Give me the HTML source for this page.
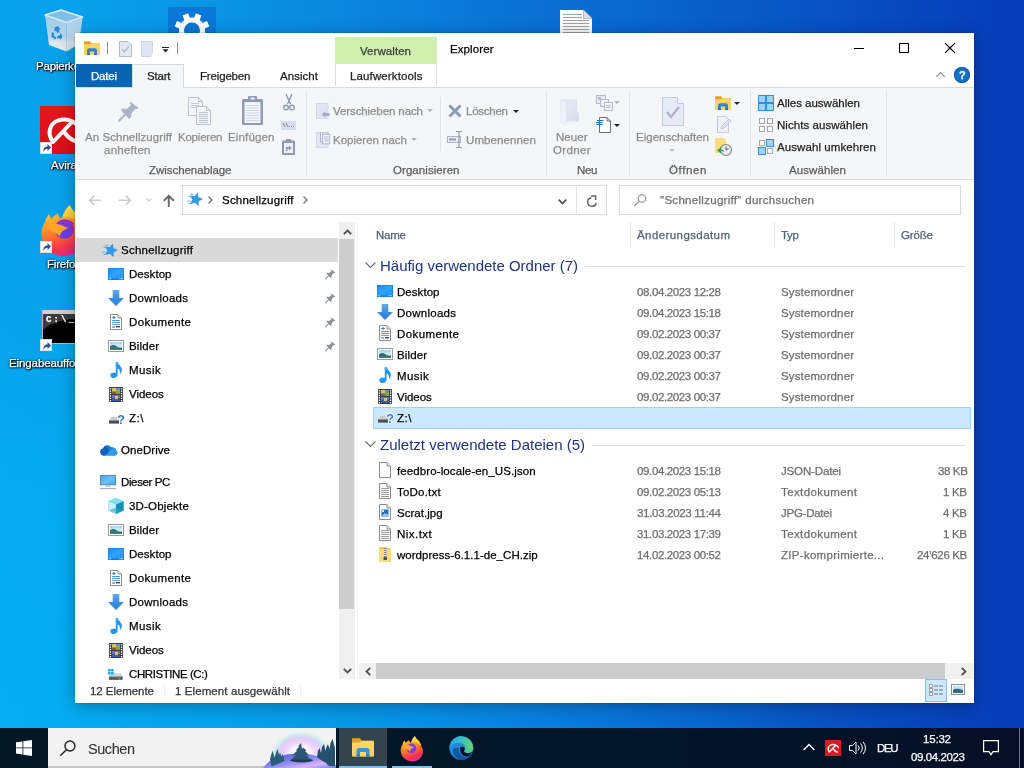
<!DOCTYPE html>
<html lang="de"><head><meta charset="utf-8"><title>Explorer</title>
<style>
html,body{margin:0;padding:0;width:1024px;height:768px;overflow:hidden;}
body{position:relative;font-family:'Liberation Sans',sans-serif;font-size:12px;background:#0a84d8;}
.a{position:absolute;}
.t{position:absolute;white-space:pre;line-height:20px;height:20px;}
svg{position:absolute;overflow:visible;}
#desk{position:absolute;left:0;top:0;width:1024px;height:728px;
 background:radial-gradient(ellipse 820px 480px at 0% 100%,rgba(0,190,255,.38) 0,rgba(0,190,255,.3) 50%,rgba(0,190,255,0) 100%),linear-gradient(90deg,#08a2ec 0px,#08a0ea 80px,#0a8ce0 300px,#0a72d6 520px,#0859c8 760px,#0742bc 960px,#063cb8 1024px);}
#win{position:absolute;left:75px;top:33px;width:899px;height:670px;background:#fff;box-shadow:0 0 1px rgba(0,0,0,.45),0 3px 16px rgba(0,0,0,.3);}
#task{position:absolute;left:0;top:728px;width:1024px;height:40px;background:linear-gradient(90deg,#021824 0,#03162a 60%,#050f26 100%);}
.dl{text-shadow:0 1px 2px #000,0 0 3px #000,1px 1px 1px #000;}
.t{will-change:transform;-webkit-text-stroke:0.25px currentColor;}

</style></head><body>
<div id="desk"></div>
<svg style="left:45px;top:10px" width="38" height="42" viewBox="0 0 38 42"><defs><linearGradient id="rb1" x1="0" y1="0" x2="0" y2="1"><stop offset="0" stop-color="#9ccbea"/><stop offset=".62" stop-color="#b7d6ea"/><stop offset=".75" stop-color="#dfe7ec"/><stop offset="1" stop-color="#e6ebee"/></linearGradient><linearGradient id="rb2" x1="0" y1="0" x2="0" y2="1"><stop offset="0" stop-color="#a9d2ee"/><stop offset=".62" stop-color="#bcd9ec"/><stop offset=".75" stop-color="#d9e3e9"/><stop offset="1" stop-color="#dde5ea"/></linearGradient></defs><path d="M0 5l21.500 7.500v29l-17.500-6.500z" fill="url(#rb1)"/><path d="M21.500 12.500l16.100-5.500-3.600 27-12.500 7.500z" fill="url(#rb2)"/><path d="M0 5l16-5 21.600 7-16.100 5.500z" fill="#7fbfe9" stroke="#d4eaf8" stroke-width="1.600" stroke-linejoin="round"/><g fill="#2a86dc"><path d="M9.500 17.500l3.500-1.500 2.500 3.500-1.800.6 1 2.200-2.400.8-1.200-2.400-1.600.6z"/><path d="M15.500 22.500l2 4-2 3.200-1-1.600-2.600.6.600-2.800 2.400-.6z"/><path d="M7 22l2.200 1.200-.4 2.600 2.600 1.800-1.200 2-3.800-2.800z"/></g></svg>
<span class="t" style="left:35.5px;top:56.0px;font-size:11.5px;color:#fff;letter-spacing:-0.192px;text-shadow:0 1px 2px #000,0 0 3px #000,1px 1px 1px #000;">Papierkorb</span>
<div class="a" style="left:168px;top:7px;width:48px;height:40px;background:#0a78d8"></div>
<svg style="left:168px;top:7px" width="48" height="40" viewBox="0 0 48 40"><circle cx="24" cy="23.500" r="10.500" fill="none" stroke="#fff" stroke-width="5"/><rect x="21" y="6" width="6" height="7" fill="#fff" transform="rotate(22.5 24 23.500)"/><rect x="21" y="6" width="6" height="7" fill="#fff" transform="rotate(67.5 24 23.500)"/><rect x="21" y="6" width="6" height="7" fill="#fff" transform="rotate(112.5 24 23.500)"/><rect x="21" y="6" width="6" height="7" fill="#fff" transform="rotate(157.5 24 23.500)"/><rect x="21" y="6" width="6" height="7" fill="#fff" transform="rotate(202.5 24 23.500)"/><rect x="21" y="6" width="6" height="7" fill="#fff" transform="rotate(247.5 24 23.500)"/><rect x="21" y="6" width="6" height="7" fill="#fff" transform="rotate(292.5 24 23.500)"/><rect x="21" y="6" width="6" height="7" fill="#fff" transform="rotate(337.5 24 23.500)"/></svg>
<svg style="left:560px;top:10px" width="32" height="40" viewBox="0 0 32 40"><path d="M0 0h23.500l8.500 8.500v31.500h-32z" fill="#fbfbfb"/><path d="M23.500 0v8.500h8.500z" fill="#dcdcdc"/><path d="M23.500 0v8.500h8.500" fill="none" stroke="#b0b0b0" stroke-width=".8"/><rect x="3" y="4" width="19" height="1" fill="#a2a2a2"/><rect x="3" y="7" width="19" height="1" fill="#a2a2a2"/><rect x="3" y="10" width="26" height="1" fill="#a2a2a2"/><rect x="3" y="13" width="26" height="1" fill="#a2a2a2"/><rect x="3" y="16" width="26" height="1" fill="#a2a2a2"/><rect x="3" y="19" width="26" height="1" fill="#a2a2a2"/><rect x="3" y="22" width="26" height="1" fill="#a2a2a2"/><rect x="3" y="25" width="26" height="1" fill="#a2a2a2"/></svg>
<div class="a" style="left:40px;top:106px;width:48px;height:48px;background:linear-gradient(180deg,#e5161e,#da0f18)"></div>
<svg style="left:40px;top:106px" width="48" height="48" viewBox="0 0 48 48"><path d="M13 36C7 28 9 18 18 14.500C24 12.500 30 13.500 35 17C38 19 40 22 41 25M13.500 35.500L31 17M24.500 26.500Q29 33 37 36" fill="none" stroke="#fff" stroke-width="4" stroke-linecap="round"/></svg>
<span class="t" style="left:50.8px;top:154.5px;font-size:11.5px;color:#fff;text-shadow:0 1px 2px #000,0 0 3px #000,1px 1px 1px #000;">Avira</span>
<svg style="left:40px;top:204.5px" width="48" height="48" viewBox="0 0 24 24"><defs><linearGradient id="ffg" x1=".3" y1="0" x2=".7" y2="1"><stop offset="0" stop-color="#ffbd2e"/><stop offset=".4" stop-color="#ff7a28"/><stop offset=".75" stop-color="#f8344e"/><stop offset="1" stop-color="#d82a9c"/></linearGradient><linearGradient id="ffy" x1="0" y1="0" x2="0" y2="1"><stop offset="0" stop-color="#fff04a"/><stop offset="1" stop-color="#ffb02a"/></linearGradient><radialGradient id="ffp" cx=".4" cy=".7" r=".8"><stop offset="0" stop-color="#5b45e8"/><stop offset="1" stop-color="#a12fd6"/></radialGradient></defs><path d="M11 7c.5-3 2-5.500 4-7 .5 2 2 3 3.500 4.500 1.500 1.700 2.500 3.500 3 5.500z" fill="url(#ffy)"/><path d="M2.500 8.500c.3-1.500 1-3 2-4 .3 1 .8 1.800 1.500 2.300.8-1.200 1.800-2 3-2.500.2 1 .6 1.800 1.300 2.300 4-1 8 .3 10.500 3.200 2.500 3 3 7 1 10.200a11.300 11.300 0 0 1-21-4.500c-.3-2.500.3-5 1.700-7z" fill="url(#ffg)"/><circle cx="12.200" cy="12" r="4.900" fill="url(#ffp)"/><path d="M4 9.800c2-.8 5-.6 7 .5l3 1.200-2.200 1.200c-1 .7-1.800 1.500-1.800 3-1.500-1.500-3.500-2.500-5.500-2.800z" fill="#ffa62a"/><path d="M13.500 7.500c1.800.2 3 1 3.800 2.200-1-.3-1.800-.3-2.600 0z" fill="#a12fd6"/></svg>
<span class="t" style="left:47px;top:253.5px;font-size:11.5px;color:#fff;letter-spacing:-0.193px;text-shadow:0 1px 2px #000,0 0 3px #000,1px 1px 1px #000;">Firefox</span>
<div class="a" style="left:42px;top:310px;width:46px;height:34px;background:#000;border:1px solid #b9b9b9;box-sizing:border-box;border-top:4px solid #d0d0d0"></div>
<svg style="left:43px;top:314px" width="44" height="16" viewBox="0 0 44 16"><path d="M0 0h44v4c-20 0-36 4-44 12z" fill="#3c3c3c"/></svg>
<span class="t" style="left:45.5px;top:309.5px;font-size:9px;color:#fff;font-weight:700;letter-spacing:2.161px;font-family:'Liberation Mono',monospace;">C:\_</span>
<span class="t" style="left:8.8px;top:353.0px;font-size:11.5px;color:#fff;letter-spacing:-0.101px;text-shadow:0 1px 2px #000,0 0 3px #000,1px 1px 1px #000;">Eingabeaufforderung</span>
<div class="a" style="left:40px;top:141.5px;width:12px;height:12px;background:#fff;border:1px solid #d5dbe0;box-sizing:border-box"></div>
<svg style="left:42.5px;top:144.0px" width="8" height="8" viewBox="0 0 8 8"><path d="M.5 8c-.5-4 1.500-5.500 4-5.500v-2.500l3.500 3.500-3.500 3.500v-2.300c-2 0-3 1-4 3.300z" fill="#2b4f9c"/></svg>
<div class="a" style="left:40px;top:240.5px;width:12px;height:12px;background:#fff;border:1px solid #d5dbe0;box-sizing:border-box"></div>
<svg style="left:42.5px;top:243.0px" width="8" height="8" viewBox="0 0 8 8"><path d="M.5 8c-.5-4 1.500-5.500 4-5.500v-2.500l3.500 3.500-3.500 3.500v-2.300c-2 0-3 1-4 3.300z" fill="#2b4f9c"/></svg>
<div class="a" style="left:40px;top:339px;width:12px;height:12px;background:#fff;border:1px solid #d5dbe0;box-sizing:border-box"></div>
<svg style="left:42.5px;top:341.5px" width="8" height="8" viewBox="0 0 8 8"><path d="M.5 8c-.5-4 1.500-5.500 4-5.500v-2.500l3.500 3.500-3.500 3.500v-2.300c-2 0-3 1-4 3.300z" fill="#2b4f9c"/></svg>
<div id="win"></div>
<svg style="left:84px;top:41px" width="16" height="14.0" viewBox="0 0 16 14"><path d="M0 1a.8 .8 0 0 1 .8-.8h5.200l1.500 2h8a.5 .5 0 0 1 .5 .5v10.800a.5 .5 0 0 1-.5 .5h-15a.5 .5 0 0 1-.5-.5z" fill="#e3a11c"/><path d="M0 3.200h5.500l1.500-1h8.500a.5 .5 0 0 1 .5 .5v10.800a.5 .5 0 0 1-.5 .5h-15a.5 .5 0 0 1-.5-.5z" fill="#fbd467"/><path d="M3 14v-4.500a2.200 2.200 0 0 1 2.200-2.200h5.600a2.200 2.200 0 0 1 2.200 2.200v4.500h-2.800v-3.500h-4.400v3.500z" fill="#2b86d6"/><path d="M3 12.500h2.800v1.500h-2.800zM10.200 12.500h2.800v1.500h-2.800z" fill="#1f6cb8"/></svg>
<div class="a" style="left:107px;top:42px;width:1px;height:12px;background:#8a8a8a"></div>
<svg style="left:119px;top:41px" width="13" height="16" viewBox="0 0 13 16"><path d="M.5 .5h8.500l3.500 3.500v11.500h-12z" fill="#e4eaf5" stroke="#b4bccb"/><path d="M3 8l2.500 3 4.500-6" fill="none" stroke="#b4bccb" stroke-width="1.300"/></svg>
<svg style="left:141px;top:41px" width="13" height="16" viewBox="0 0 13 16"><path d="M.5 .5h11v11l-1.500 1.500v2.500h-9.500z" fill="#dfe6f3" stroke="#cdd5e4"/></svg>
<svg style="left:162px;top:47px" width="7" height="6" viewBox="0 0 7 6"><rect x="0" y="0" width="7" height="1" fill="#222"/><path d="M.5 2.300h6l-3 3.200z" fill="#222"/></svg>
<div class="a" style="left:177px;top:42px;width:1px;height:12px;background:#8a8a8a"></div>
<div class="a" style="left:335px;top:37px;width:102px;height:27px;background:#d0eeae"></div>
<span class="t" style="left:360px;top:41.0px;font-size:11.5px;color:#3c3c3c;letter-spacing:0.061px;">Verwalten</span>
<span class="t" style="left:450px;top:39.0px;font-size:11.5px;color:#000;letter-spacing:0.096px;">Explorer</span>
<div class="a" style="left:854px;top:48px;width:10px;height:1px;background:#000"></div>
<div class="a" style="left:899px;top:43px;width:10px;height:10px;border:1px solid #000;box-sizing:border-box"></div>
<svg style="left:945px;top:43px" width="10" height="10" viewBox="0 0 10 10"><path d="M0 0l10 10M10 0l-10 10" stroke="#000" stroke-width="1.100"/></svg>
<div class="a" style="left:75px;top:87px;width:899px;height:1px;background:#dadbdc"></div>
<div class="a" style="left:76px;top:64px;width:56px;height:23px;background:#0a64b4"></div>
<span class="t" style="left:90.5px;top:66.0px;font-size:11.5px;color:#fff;letter-spacing:-0.215px;">Datei</span>
<div class="a" style="left:132px;top:64px;width:52px;height:24px;background:#f5f6f7;border:1px solid #dadbdc;border-bottom:none;box-sizing:border-box"></div>
<span class="t" style="left:146.5px;top:66.0px;font-size:11.5px;color:#222;letter-spacing:-0.199px;">Start</span>
<span class="t" style="left:200px;top:66.0px;font-size:11.5px;color:#222;letter-spacing:-0.162px;">Freigeben</span>
<span class="t" style="left:280px;top:66.0px;font-size:11.5px;color:#222;letter-spacing:0.047px;">Ansicht</span>
<div class="a" style="left:335px;top:64px;width:102px;height:22px;border-left:1px solid #dcdcdc;border-right:1px solid #dcdcdc;box-sizing:border-box"></div>
<span class="t" style="left:349.5px;top:66.0px;font-size:11.5px;color:#222;letter-spacing:0.128px;">Laufwerktools</span>
<svg style="left:936px;top:72px" width="9" height="6" viewBox="0 0 9 6"><path d="M.3 4.800l4.200-4.200 4.200 4.200" fill="none" stroke="#8c8c8c" stroke-width="1.100"/></svg>
<div class="a" style="left:954px;top:67px;width:16px;height:16px;border-radius:50%;background:#1470c6;box-shadow:inset 0 0 0 1px #0f5fae;"></div>
<span class="t" style="left:958.8px;top:65.3px;font-size:11px;color:#fff;font-weight:700;">?</span>
<div class="a" style="left:75px;top:88px;width:899px;height:91px;background:#f5f6f7"></div>
<div class="a" style="left:75px;top:179px;width:899px;height:1px;background:#dadbdc"></div>
<div class="a" style="left:306px;top:91px;width:1px;height:84px;background:#e2e3e4"></div>
<div class="a" style="left:546px;top:91px;width:1px;height:84px;background:#e2e3e4"></div>
<div class="a" style="left:629px;top:91px;width:1px;height:84px;background:#e2e3e4"></div>
<div class="a" style="left:750px;top:91px;width:1px;height:84px;background:#e2e3e4"></div>
<div class="a" style="left:886px;top:91px;width:1px;height:84px;background:#e2e3e4"></div>
<div class="a" style="left:440px;top:97px;width:1px;height:54px;background:#e2e3e4"></div>
<svg style="left:117.5px;top:100.5px" width="21" height="21" viewBox="0 0 21 21"><path d="M12.600 .8L20.400 6.800L19.300 8.200L17.500 7.800L13.500 12L13.200 15.600L11.500 18.300L2.700 9L5 7.500L8.800 8L13 3.800L11.600 2.200Z" fill="#a9b6ca"/><path d="M7 13.500L1.200 19.800" stroke="#a9b6ca" stroke-width="2" stroke-linecap="round"/></svg>
<span class="t" style="left:84.5px;top:127.0px;font-size:11.5px;color:#8b8b8b;letter-spacing:0.057px;">An Schnellzugriff</span>
<span class="t" style="left:104px;top:140.0px;font-size:11.5px;color:#8b8b8b;letter-spacing:0.248px;">anheften</span>
<svg style="left:188px;top:97px" width="24" height="28" viewBox="0 0 24 28"><path d="M.5 .5h10l4 4v14h-14z" fill="#f4f6fa" stroke="#b9c2d3"/><path d="M10.500 .5v4h4" fill="none" stroke="#b9c2d3"/><rect x="3" y="6" width="8" height="1" fill="#c3cbda"/><rect x="3" y="8" width="8" height="1" fill="#c3cbda"/><rect x="3" y="10" width="8" height="1" fill="#c3cbda"/><path d="M8.500 9.500h10l4 4v14h-14z" fill="#f4f6fa" stroke="#b9c2d3"/><path d="M18.500 9.500v4h4" fill="none" stroke="#b9c2d3"/><rect x="11" y="15" width="9" height="1" fill="#b9c2d3"/><rect x="11" y="17" width="9" height="1" fill="#b9c2d3"/><rect x="11" y="19" width="9" height="1" fill="#b9c2d3"/><rect x="11" y="21" width="9" height="1" fill="#b9c2d3"/><rect x="11" y="23" width="9" height="1" fill="#b9c2d3"/><rect x="11" y="25" width="9" height="1" fill="#b9c2d3"/></svg>
<span class="t" style="left:177.5px;top:127.0px;font-size:11.5px;color:#8b8b8b;letter-spacing:-0.221px;">Kopieren</span>
<svg style="left:242px;top:96px" width="21" height="29" viewBox="0 0 21 29"><rect x="0" y="3" width="21" height="26" rx="1.500" fill="#8d9ab5"/><rect x="2.500" y="6" width="16" height="21" fill="#f1f4f9"/><rect x="6" y="0" width="9" height="6" rx="1" fill="#8d9ab5"/><rect x="8.500" y="1.500" width="4" height="2" fill="#f1f4f9"/><rect x="4" y="9.0" width="13" height="1" fill="#cfd6e4"/><rect x="4" y="11.5" width="13" height="1" fill="#cfd6e4"/><rect x="4" y="14.0" width="13" height="1" fill="#cfd6e4"/><rect x="4" y="16.5" width="13" height="1" fill="#cfd6e4"/><rect x="4" y="19.0" width="13" height="1" fill="#cfd6e4"/><rect x="4" y="21.5" width="13" height="1" fill="#cfd6e4"/><rect x="4" y="24.0" width="13" height="1" fill="#cfd6e4"/></svg>
<span class="t" style="left:228px;top:127.0px;font-size:11.5px;color:#8b8b8b;letter-spacing:0.156px;">Einfügen</span>
<svg style="left:283px;top:94px" width="12" height="17" viewBox="0 0 12 17"><path d="M3 0l4.500 10M9 0l-4.500 10" stroke="#8d9ab5" stroke-width="1.400" fill="none"/><circle cx="3" cy="13.500" r="2.300" fill="none" stroke="#8d9ab5" stroke-width="1.400"/><circle cx="9" cy="13.500" r="2.300" fill="none" stroke="#8d9ab5" stroke-width="1.400"/></svg>
<div class="a" style="left:281px;top:121px;width:15px;height:9px;background:#d5dcea"></div>
<svg style="left:283px;top:123px" width="11" height="5" viewBox="0 0 11 5"><path d="M0 0l2 4M3 0l2 4" stroke="#7c8aa8" stroke-width="1"/><rect x="6" y="3" width="1" height="1" fill="#7c8aa8"/><rect x="8" y="3" width="1" height="1" fill="#7c8aa8"/><rect x="10" y="3" width="1" height="1" fill="#7c8aa8"/></svg>
<svg style="left:282px;top:139px" width="13" height="16" viewBox="0 0 13 16"><rect x="0" y="1.500" width="13" height="14.500" rx="1" fill="#8d9ab5"/><rect x="2" y="4" width="9" height="10" fill="#eef2f8"/><rect x="4" y="0" width="5" height="3" fill="#8d9ab5"/><path d="M4 12v-4h3v-1.500l3 2.500-3 2.500v-1.500h-1.500v2z" fill="#8d9ab5"/></svg>
<span class="t" style="left:149px;top:160.0px;font-size:11.5px;color:#5c5c5c;letter-spacing:-0.047px;">Zwischenablage</span>
<svg style="left:316px;top:103px" width="14" height="16" viewBox="0 0 14 16"><rect x=".5" y=".5" width="11.500" height="15" fill="#dfe5f2" stroke="#d0d8e9"/><path d="M13.500 10v3h-4v2l-4-3.500 4-3.500v2z" fill="#a3b0c8"/></svg>
<span class="t" style="left:333px;top:101.0px;font-size:11.5px;color:#8b8b8b;letter-spacing:-0.096px;">Verschieben nach</span>
<svg style="left:427px;top:109px" width="6" height="3" viewBox="0 0 6 3"><path d="M0 0h6l-3 3z" fill="#b5b5b5"/></svg>
<svg style="left:316px;top:132px" width="14" height="16" viewBox="0 0 14 16"><rect x=".5" y=".5" width="11.500" height="15" fill="#dfe5f2" stroke="#d0d8e9"/><rect x="4.500" y=".8" width="7.500" height="9" fill="#eef1f7" stroke="#aab5cb" stroke-width=".9"/><rect x="6.500" y="2.500" width="7.200" height="9.300" fill="#f3f5fa" stroke="#aab5cb" stroke-width=".9"/><path d="M8 5h4.500M8 7h4.500M8 9h4.500" stroke="#aab5cb" stroke-width=".9"/></svg>
<span class="t" style="left:333px;top:129.5px;font-size:11.5px;color:#8b8b8b;letter-spacing:-0.014px;">Kopieren nach</span>
<svg style="left:411px;top:137.5px" width="6" height="3" viewBox="0 0 6 3"><path d="M0 0h6l-3 3z" fill="#b5b5b5"/></svg>
<svg style="left:448px;top:104px" width="14" height="14" viewBox="0 0 14 14"><path d="M1.500 1.500l11 11M12.500 1.500l-11 11" stroke="#8d9ab5" stroke-width="3"/></svg>
<span class="t" style="left:466px;top:101.0px;font-size:11.5px;color:#8b8b8b;letter-spacing:-0.247px;">Löschen</span>
<svg style="left:513px;top:109.5px" width="6" height="3" viewBox="0 0 6 3"><path d="M0 0h6l-3 3z" fill="#222"/></svg>
<svg style="left:447px;top:131px" width="17" height="17" viewBox="0 0 17 17"><rect x=".5" y="5.500" width="13" height="6" fill="#e8edf5" stroke="#a9b4c9"/><rect x="2" y="7.500" width="7" height="2" fill="#8d9ab5"/><path d="M9 .5h6M9 16.500h6M12 .5v16" stroke="#8d9ab5" stroke-width="1.200" fill="none"/></svg>
<span class="t" style="left:466px;top:129.5px;font-size:11.5px;color:#8b8b8b;letter-spacing:0.104px;">Umbenennen</span>
<span class="t" style="left:392.5px;top:160.0px;font-size:11.5px;color:#5c5c5c;letter-spacing:0.060px;">Organisieren</span>
<svg style="left:560px;top:98px" width="21" height="28" viewBox="0 0 21 28"><defs><linearGradient id="nfg" x1="0" y1="0" x2="1" y2="1"><stop offset="0" stop-color="#e6ebf5"/><stop offset="1" stop-color="#d6deee"/></linearGradient></defs><path d="M1 1.200H17V12.500L19 15.500V23.600H6L1 18Z" fill="url(#nfg)"/><path d="M1 1.200L6.200 4.500V27.500L1 23.600Z" fill="#eef2f9" stroke="#dde3ef" stroke-width=".6"/></svg>
<span class="t" style="left:556px;top:127.0px;font-size:11.5px;color:#8b8b8b;letter-spacing:0.043px;">Neuer</span>
<span class="t" style="left:553px;top:140.0px;font-size:11.5px;color:#8b8b8b;letter-spacing:0.341px;">Ordner</span>
<svg style="left:596px;top:95px" width="17" height="16" viewBox="0 0 17 16"><rect x=".5" y=".5" width="9" height="8" fill="#e4e9f3" stroke="#b3bccf"/><rect x="2" y="2" width="3" height="3" fill="#b3bccf"/><rect x="4.500" y="4.500" width="8" height="7" fill="#eef1f7" stroke="#b3bccf"/><rect x="8.500" y="7.500" width="8" height="8" fill="#f4f6fa" stroke="#b3bccf"/><rect x="10" y="10" width="5" height="1" fill="#b3bccf"/><rect x="10" y="12" width="5" height="1" fill="#b3bccf"/></svg>
<svg style="left:614px;top:101px" width="6" height="3" viewBox="0 0 6 3"><path d="M0 0h6l-3 3z" fill="#b5b5b5"/></svg>
<svg style="left:596px;top:117px" width="16" height="16" viewBox="0 0 16 16"><path d="M3.500 .5h7.500l3.500 3.500v11.500h-11z" fill="#fff" stroke="#6e6e6e"/><path d="M11 .5v3.500h3.500" fill="none" stroke="#6e6e6e"/><path d="M1 3.500h6.500M0 5.500h6.500M.5 7.500h6" stroke="#1f6fc4" stroke-width="1"/></svg>
<svg style="left:614px;top:123.5px" width="6" height="3" viewBox="0 0 6 3"><path d="M0 0h6l-3 3z" fill="#222"/></svg>
<span class="t" style="left:576.5px;top:160.0px;font-size:11.5px;color:#5c5c5c;letter-spacing:-0.305px;">Neu</span>
<svg style="left:662px;top:97px" width="22" height="29" viewBox="0 0 22 29"><path d="M.5 .5h15l6 6v22h-21z" fill="#e6ebf6" stroke="#c3cbde"/><path d="M15.500 .5v6h6" fill="#f4f6fb" stroke="#c3cbde"/><path d="M5 15l4 5 8-10" fill="none" stroke="#a9b4c9" stroke-width="2.200"/></svg>
<span class="t" style="left:636px;top:127.0px;font-size:11.5px;color:#8b8b8b;letter-spacing:0.009px;">Eigenschaften</span>
<svg style="left:669px;top:149px" width="6" height="3" viewBox="0 0 6 3"><path d="M0 0h6l-3 3z" fill="#c2c2c2"/></svg>
<svg style="left:715px;top:96px" width="16" height="14.0" viewBox="0 0 16 14"><path d="M0 1a.8 .8 0 0 1 .8-.8h5.200l1.500 2h8a.5 .5 0 0 1 .5 .5v10.800a.5 .5 0 0 1-.5 .5h-15a.5 .5 0 0 1-.5-.5z" fill="#e3a11c"/><path d="M0 3.200h5.500l1.500-1h8.500a.5 .5 0 0 1 .5 .5v10.800a.5 .5 0 0 1-.5 .5h-15a.5 .5 0 0 1-.5-.5z" fill="#fbd467"/><path d="M3 14v-4.500a2.200 2.200 0 0 1 2.200-2.200h5.600a2.200 2.200 0 0 1 2.200 2.200v4.500h-2.800v-3.500h-4.400v3.500z" fill="#2b86d6"/><path d="M3 12.500h2.800v1.500h-2.800zM10.200 12.500h2.800v1.500h-2.800z" fill="#1f6cb8"/></svg>
<svg style="left:734px;top:102px" width="6" height="3" viewBox="0 0 6 3"><path d="M0 0h6l-3 3z" fill="#222"/></svg>
<svg style="left:717px;top:116px" width="14" height="17" viewBox="0 0 14 17"><path d="M.5 .5h8l3 3v13h-11z" fill="#eef1f7" stroke="#c3cbde"/><path d="M4 13l1-3 7-7 2 2-7 7z" fill="#dfe5f0" stroke="#b3bccf" stroke-width=".8"/></svg>
<svg style="left:715px;top:138px" width="17" height="18" viewBox="0 0 17 18"><path d="M0 0h9l2 2v13h-11z" fill="#f7dd7e"/><circle cx="11" cy="12" r="5.500" fill="#e9ecef" stroke="#7d8790" stroke-width="1.200"/><path d="M11 8.500v3.500l2.500-1.500" stroke="#555" fill="none" stroke-width="1"/><path d="M2 12.500l4-3.500v2.500c2 0 3 1 3.500 3-1-1-2-1.500-3.500-1.500v2.500z" fill="#2fa84f"/></svg>
<span class="t" style="left:668.5px;top:160.0px;font-size:11.5px;color:#5c5c5c;letter-spacing:0.634px;">Öffnen</span>
<svg style="left:758px;top:95px" width="16" height="16" viewBox="0 0 16 16"><rect x="0.5" y="0.5" width="7" height="7" fill="#9fd3f6" stroke="#2f8fdc"/><rect x="8.5" y="0.5" width="7" height="7" fill="#9fd3f6" stroke="#2f8fdc"/><rect x="0.5" y="8.5" width="7" height="7" fill="#9fd3f6" stroke="#2f8fdc"/><rect x="8.5" y="8.5" width="7" height="7" fill="#9fd3f6" stroke="#2f8fdc"/></svg>
<span class="t" style="left:777px;top:93.0px;font-size:11.5px;color:#1e1e1e;letter-spacing:-0.008px;">Alles auswählen</span>
<svg style="left:758px;top:117px" width="16" height="16" viewBox="0 0 16 16"><rect x="1.5" y="1.5" width="5" height="5" fill="#fff" stroke="#a6a6a6"/><rect x="9.5" y="1.5" width="5" height="5" fill="#fff" stroke="#a6a6a6"/><rect x="1.5" y="9.5" width="5" height="5" fill="#fff" stroke="#a6a6a6"/><rect x="9.5" y="9.5" width="5" height="5" fill="#fff" stroke="#a6a6a6"/></svg>
<span class="t" style="left:777px;top:115.0px;font-size:11.5px;color:#1e1e1e;letter-spacing:0.057px;">Nichts auswählen</span>
<svg style="left:758px;top:139px" width="16" height="16" viewBox="0 0 16 16"><rect x="1.5" y="1.5" width="5" height="5" fill="#fff" stroke="#a6a6a6"/><rect x="8.5" y="0.5" width="7" height="7" fill="#9fd3f6" stroke="#2f8fdc"/><rect x="0.5" y="8.5" width="7" height="7" fill="#9fd3f6" stroke="#2f8fdc"/><rect x="9.5" y="9.5" width="5" height="5" fill="#fff" stroke="#a6a6a6"/></svg>
<span class="t" style="left:777px;top:137.0px;font-size:11.5px;color:#1e1e1e;letter-spacing:0.079px;">Auswahl umkehren</span>
<span class="t" style="left:789px;top:160.0px;font-size:11.5px;color:#5c5c5c;letter-spacing:0.092px;">Auswählen</span>
<svg style="left:89px;top:194.5px" width="12" height="10.5" viewBox="0 0 12 10.5"><path d="M5.300 .6l-4.600 4.650 4.600 4.650M.8 5.250h11.200" fill="none" stroke="#cdcdcd" stroke-width="1.700"/></svg>
<svg style="left:119px;top:194.5px" width="12" height="10.5" viewBox="0 0 12 10.5"><path d="M6.700 .6l4.600 4.650-4.600 4.650M11.200 5.250h-11.200" fill="none" stroke="#cdcdcd" stroke-width="1.700"/></svg>
<svg style="left:145.5px;top:198px" width="6" height="3.5" viewBox="0 0 6 3.5"><path d="M.4 .4l2.600 2.600 2.600-2.600" fill="none" stroke="#cdcdcd" stroke-width="1.200"/></svg>
<svg style="left:163px;top:195px" width="11.5" height="12" viewBox="0 0 11.5 12"><path d="M.8 5.800l5-5 5 5M5.800 1.200v10.800" fill="none" stroke="#6a6a6a" stroke-width="2"/></svg>
<div class="a" style="left:182px;top:185px;width:425px;height:30px;border:1px solid #d9d9d9;box-sizing:border-box;background:#fff"></div>
<div class="a" style="left:576px;top:186px;width:1px;height:28px;background:#e5e5e5"></div>
<svg style="left:186.5px;top:192.5px" width="15" height="12.5" viewBox="0 0 15 12.5"><polygon points="10.51,0.02 11.21,4.45 15.39,6.05 11.40,8.09 11.17,12.56 8.00,9.39 3.67,10.55 5.70,6.56 3.26,2.81 7.69,3.51" fill="#2e9bee" stroke="#1f7fd0" stroke-width=".5"/><path d="M3.500 1.300h3M1.500 3.600h3.500M.3 8.200h3.200M1.500 10.500h2.500" stroke="#55aef0" stroke-width=".9"/></svg>
<svg style="left:208px;top:196px" width="5" height="8" viewBox="0 0 5 8"><path d="M.5 .5l3.500 3.500-3.500 3.500" fill="none" stroke="#6a6a6a" stroke-width="1.200"/></svg>
<span class="t" style="left:222px;top:190.0px;font-size:11.5px;color:#000;letter-spacing:0.206px;">Schnellzugriff</span>
<svg style="left:303px;top:196px" width="5" height="8" viewBox="0 0 5 8"><path d="M.5 .5l3.500 3.500-3.500 3.500" fill="none" stroke="#6a6a6a" stroke-width="1.200"/></svg>
<svg style="left:558px;top:199px" width="9" height="6" viewBox="0 0 9 6"><path d="M.7 .7l3.800 3.800 3.800-3.800" fill="none" stroke="#555" stroke-width="1.800"/></svg>
<svg style="left:587px;top:194.5px" width="10" height="12" viewBox="0 0 10 12"><path d="M9.230 7.750A4.300 4.300 0 1 1 4.250 2.770" fill="none" stroke="#666" stroke-width="1.500"/><path d="M4 .9h4.600v4" fill="none" stroke="#666" stroke-width="1.500"/></svg>
<div class="a" style="left:619px;top:185px;width:342px;height:30px;border:1px solid #d9d9d9;box-sizing:border-box;background:#fff"></div>
<svg style="left:634px;top:193.5px" width="12" height="12" viewBox="0 0 12 12"><circle cx="8" cy="4.500" r="3.800" fill="none" stroke="#8a8a8a" stroke-width="1.100"/><path d="M5.300 7.200l-4.800 4.800" stroke="#8a8a8a" stroke-width="1.100"/></svg>
<span class="t" style="left:660px;top:190.0px;font-size:11.5px;color:#6d6d6d;letter-spacing:0.295px;">"Schnellzugriff" durchsuchen</span>
<div class="a" style="left:76px;top:238px;width:262px;height:24px;background:#d9d9d9"></div>
<svg style="left:102px;top:243.5px" width="15" height="12.5" viewBox="0 0 15 12.5"><polygon points="10.51,0.02 11.21,4.45 15.39,6.05 11.40,8.09 11.17,12.56 8.00,9.39 3.67,10.55 5.70,6.56 3.26,2.81 7.69,3.51" fill="#2e9bee" stroke="#1f7fd0" stroke-width=".5"/><path d="M3.500 1.300h3M1.500 3.600h3.500M.3 8.200h3.200M1.500 10.500h2.500" stroke="#55aef0" stroke-width=".9"/></svg>
<span class="t" style="left:121px;top:240.0px;font-size:11.5px;color:#000;letter-spacing:0.244px;">Schnellzugriff</span>
<svg style="left:108px;top:268px" width="16" height="12" viewBox="0 0 16 12"><defs><linearGradient id="dg" x1="0" y1="0" x2="1" y2="1"><stop offset="0" stop-color="#1f8df0"/><stop offset=".5" stop-color="#2fa3f8"/><stop offset="1" stop-color="#2196f3"/></linearGradient></defs><rect x="0" y="0" width="16" height="12" fill="#1a7ad6"/><rect x=".6" y=".6" width="14.800" height="9.400" fill="url(#dg)"/><rect x=".6" y="10" width="14.800" height="1.400" fill="#1f86e4"/><rect x="1.500" y="10.200" width="1.200" height="1" fill="#fff"/><rect x="13.300" y="10.200" width="1.200" height="1" fill="#fff"/><rect x="11.500" y="10.200" width="1" height="1" fill="#cfe6fb"/></svg>
<span class="t" style="left:129.3px;top:264.0px;font-size:11.5px;color:#000;letter-spacing:0.052px;">Desktop</span>
<svg style="left:324.7px;top:268.8px" width="10.5" height="10.5" viewBox="0 0 21 21"><path d="M12.600 .8L20.400 6.800L19.300 8.200L17.500 7.800L13.500 12L13.200 15.600L11.500 18.300L2.700 9L5 7.500L8.800 8L13 3.800L11.600 2.200Z" fill="#8c9196"/><path d="M7 13.500L1.200 19.800" stroke="#8c9196" stroke-width="2.200" stroke-linecap="round"/></svg>
<svg style="left:108px;top:290px" width="16" height="16" viewBox="0 0 16 16"><defs><linearGradient id="dlg" x1="0" y1="0" x2="0" y2="1"><stop offset="0" stop-color="#62aaec"/><stop offset=".5" stop-color="#3a8fe0"/><stop offset="1" stop-color="#2f7fd4"/></linearGradient></defs><path d="M4.700 0h6.600v8h4.700l-8 8-8-8h4.700z" fill="url(#dlg)"/></svg>
<span class="t" style="left:129.3px;top:288.0px;font-size:11.5px;color:#000;letter-spacing:0.262px;">Downloads</span>
<svg style="left:324.7px;top:292.8px" width="10.5" height="10.5" viewBox="0 0 21 21"><path d="M12.600 .8L20.400 6.800L19.300 8.200L17.500 7.800L13.500 12L13.200 15.600L11.500 18.300L2.700 9L5 7.500L8.800 8L13 3.800L11.600 2.200Z" fill="#8c9196"/><path d="M7 13.500L1.200 19.800" stroke="#8c9196" stroke-width="2.200" stroke-linecap="round"/></svg>
<svg style="left:110px;top:314px" width="12" height="16" viewBox="0 0 12 16"><path d="M.5 .5h7.500l3.500 3.500v11.500h-11z" fill="#fff" stroke="#8f8f8f"/><path d="M8 .5v3.500h3.500" fill="#efefef" stroke="#8f8f8f"/><rect x="2" y="3" width="4" height="1" fill="#3b8fde"/><rect x="3" y="2" width="2" height="3" fill="#3b8fde" opacity=".6"/><rect x="2" y="6" width="8" height="1" fill="#4a94dc"/><rect x="2" y="8" width="8" height="1" fill="#4a94dc"/><rect x="2" y="10" width="8" height="1" fill="#7f97b2"/><rect x="2" y="12" width="3" height="2" fill="#9cb3cc"/><rect x="6" y="12" width="4" height="1" fill="#34495e"/><rect x="6" y="13" width="4" height="1" fill="#9cb3cc"/></svg>
<span class="t" style="left:129.3px;top:312.0px;font-size:11.5px;color:#000;letter-spacing:0.398px;">Dokumente</span>
<svg style="left:324.7px;top:316.8px" width="10.5" height="10.5" viewBox="0 0 21 21"><path d="M12.600 .8L20.400 6.800L19.300 8.200L17.500 7.800L13.500 12L13.200 15.600L11.500 18.300L2.700 9L5 7.500L8.800 8L13 3.800L11.600 2.200Z" fill="#8c9196"/><path d="M7 13.500L1.200 19.800" stroke="#8c9196" stroke-width="2.200" stroke-linecap="round"/></svg>
<svg style="left:108px;top:340px" width="16" height="12" viewBox="0 0 16 12"><defs><linearGradient id="pg" x1="0" y1="0" x2="0" y2="1"><stop offset="0" stop-color="#9fd6f7"/><stop offset=".55" stop-color="#d6ecf7"/><stop offset="1" stop-color="#8fb9c9"/></linearGradient></defs><rect x=".5" y=".5" width="15" height="11" fill="#fff" stroke="#9a9a9a"/><rect x="2" y="2" width="12" height="8" fill="url(#pg)"/><path d="M2 6.500c2-2 4-2 6-.5s4 2 6 1.500v2.500h-12z" fill="#2f6f78"/><path d="M2 8.500c4-1 8-.5 12 .5v1h-12z" fill="#3f7f5f"/></svg>
<span class="t" style="left:129.3px;top:336.0px;font-size:11.5px;color:#000;letter-spacing:0.159px;">Bilder</span>
<svg style="left:324.7px;top:340.8px" width="10.5" height="10.5" viewBox="0 0 21 21"><path d="M12.600 .8L20.400 6.800L19.300 8.200L17.500 7.800L13.500 12L13.200 15.600L11.500 18.300L2.700 9L5 7.500L8.800 8L13 3.800L11.600 2.200Z" fill="#8c9196"/><path d="M7 13.500L1.200 19.800" stroke="#8c9196" stroke-width="2.200" stroke-linecap="round"/></svg>
<svg style="left:110px;top:362px" width="12" height="16" viewBox="0 0 12 16"><path d="M5.800 0h1.800c.3 2.800 4.300 4 4.300 7.800 0 2-1 3.500-2.300 4.600 1.300-3.200-.3-5.400-2-6v6.400c0 1.900-1.800 3.200-3.900 3.200-2 0-3.400-1.100-3.400-2.600 0-1.600 1.600-2.800 3.500-2.800.8 0 1.500.2 2 .5z" fill="#2196f3"/><path d="M5.800 0h1.800c.1 1 .6 1.800 1.200 2.500l-3 1.500z" fill="#42a5f5"/></svg>
<span class="t" style="left:129.3px;top:360.0px;font-size:11.5px;color:#000;letter-spacing:0.442px;">Musik</span>
<svg style="left:109px;top:387px" width="14" height="15" viewBox="0 0 14 15"><rect x="0" y="0" width="14" height="15" fill="#3a3a3a"/><rect x="3" y="1" width="8" height="6" fill="#6b8fd0"/><rect x="3" y="1" width="4" height="3" fill="#d9c26a"/><rect x="7" y="3" width="4" height="4" fill="#7aa84f"/><rect x="3" y="5" width="4" height="2" fill="#8a5a3a"/><rect x="3" y="8" width="8" height="6" fill="#4f7fd0"/><rect x="3" y="11" width="8" height="3" fill="#2f5fb0"/><rect x="6" y="9" width="3" height="3" fill="#e0c060"/><rect x=".8" y="1.0" width="1.300" height="1.400" fill="#fff"/><rect x="11.900" y="1.0" width="1.300" height="1.400" fill="#fff"/><rect x=".8" y="3.4" width="1.300" height="1.400" fill="#fff"/><rect x="11.900" y="3.4" width="1.300" height="1.400" fill="#fff"/><rect x=".8" y="5.8" width="1.300" height="1.400" fill="#fff"/><rect x="11.900" y="5.8" width="1.300" height="1.400" fill="#fff"/><rect x=".8" y="8.2" width="1.300" height="1.400" fill="#fff"/><rect x="11.900" y="8.2" width="1.300" height="1.400" fill="#fff"/><rect x=".8" y="10.6" width="1.300" height="1.400" fill="#fff"/><rect x="11.900" y="10.6" width="1.300" height="1.400" fill="#fff"/><rect x=".8" y="13.0" width="1.300" height="1.400" fill="#fff"/><rect x="11.900" y="13.0" width="1.300" height="1.400" fill="#fff"/></svg>
<span class="t" style="left:129.3px;top:384.0px;font-size:11.5px;color:#000;letter-spacing:-0.034px;">Videos</span>
<svg style="left:109px;top:414px" width="14" height="11" viewBox="0 0 14 11"><path d="M.8 6l1.400-3h6.500l1.300 3z" fill="#c9ccd0"/><rect x="0" y="6" width="10" height="3.600" fill="#4b4f54"/><rect x="0" y="6" width="10" height="1" fill="#8b9096"/><text x="8.200" y="9.600" font-family="Liberation Sans,sans-serif" font-size="12.500" font-weight="700" fill="#2f7fc8" stroke="#fff" stroke-width="1.600" paint-order="stroke">?</text></svg>
<span class="t" style="left:129.3px;top:408.0px;font-size:11.5px;color:#000;letter-spacing:0.539px;">Z:\</span>
<svg style="left:108px;top:498px" width="16" height="16" viewBox="0 0 16 16"><path d="M8 .3l7.500 3v9.200l-7.500 3.300-7.500-3.300v-9.200z" fill="#2bb3d8"/><path d="M8 6.500l7.500-3.200v9.200l-7.500 3.300z" fill="#1590b4"/><path d="M8 6.500l-7.500-3.200 7.500-3 7.500 3z" fill="#7fe3f2"/><path d="M8 6.500v9.300l-7.500-3.300v-9.200z" fill="#c4f2f6"/><path d="M.5 12.500l7.500-3 7.500 3-7.500 3.300z" fill="#27a6c8" opacity=".55"/></svg>
<span class="t" style="left:129.3px;top:496.0px;font-size:11.5px;color:#000;letter-spacing:0.181px;">3D-Objekte</span>
<svg style="left:108px;top:524px" width="16" height="12" viewBox="0 0 16 12"><defs><linearGradient id="pg" x1="0" y1="0" x2="0" y2="1"><stop offset="0" stop-color="#9fd6f7"/><stop offset=".55" stop-color="#d6ecf7"/><stop offset="1" stop-color="#8fb9c9"/></linearGradient></defs><rect x=".5" y=".5" width="15" height="11" fill="#fff" stroke="#9a9a9a"/><rect x="2" y="2" width="12" height="8" fill="url(#pg)"/><path d="M2 6.500c2-2 4-2 6-.5s4 2 6 1.500v2.500h-12z" fill="#2f6f78"/><path d="M2 8.500c4-1 8-.5 12 .5v1h-12z" fill="#3f7f5f"/></svg>
<span class="t" style="left:129.3px;top:520.0px;font-size:11.5px;color:#000;letter-spacing:0.159px;">Bilder</span>
<svg style="left:108px;top:548px" width="16" height="12" viewBox="0 0 16 12"><defs><linearGradient id="dg" x1="0" y1="0" x2="1" y2="1"><stop offset="0" stop-color="#1f8df0"/><stop offset=".5" stop-color="#2fa3f8"/><stop offset="1" stop-color="#2196f3"/></linearGradient></defs><rect x="0" y="0" width="16" height="12" fill="#1a7ad6"/><rect x=".6" y=".6" width="14.800" height="9.400" fill="url(#dg)"/><rect x=".6" y="10" width="14.800" height="1.400" fill="#1f86e4"/><rect x="1.500" y="10.200" width="1.200" height="1" fill="#fff"/><rect x="13.300" y="10.200" width="1.200" height="1" fill="#fff"/><rect x="11.500" y="10.200" width="1" height="1" fill="#cfe6fb"/></svg>
<span class="t" style="left:129.3px;top:544.0px;font-size:11.5px;color:#000;letter-spacing:0.052px;">Desktop</span>
<svg style="left:110px;top:570px" width="12" height="16" viewBox="0 0 12 16"><path d="M.5 .5h7.500l3.500 3.500v11.500h-11z" fill="#fff" stroke="#8f8f8f"/><path d="M8 .5v3.500h3.500" fill="#efefef" stroke="#8f8f8f"/><rect x="2" y="3" width="4" height="1" fill="#3b8fde"/><rect x="3" y="2" width="2" height="3" fill="#3b8fde" opacity=".6"/><rect x="2" y="6" width="8" height="1" fill="#4a94dc"/><rect x="2" y="8" width="8" height="1" fill="#4a94dc"/><rect x="2" y="10" width="8" height="1" fill="#7f97b2"/><rect x="2" y="12" width="3" height="2" fill="#9cb3cc"/><rect x="6" y="12" width="4" height="1" fill="#34495e"/><rect x="6" y="13" width="4" height="1" fill="#9cb3cc"/></svg>
<span class="t" style="left:129.3px;top:568.0px;font-size:11.5px;color:#000;letter-spacing:0.398px;">Dokumente</span>
<svg style="left:108px;top:594px" width="16" height="16" viewBox="0 0 16 16"><defs><linearGradient id="dlg" x1="0" y1="0" x2="0" y2="1"><stop offset="0" stop-color="#62aaec"/><stop offset=".5" stop-color="#3a8fe0"/><stop offset="1" stop-color="#2f7fd4"/></linearGradient></defs><path d="M4.700 0h6.600v8h4.700l-8 8-8-8h4.700z" fill="url(#dlg)"/></svg>
<span class="t" style="left:129.3px;top:592.0px;font-size:11.5px;color:#000;letter-spacing:0.262px;">Downloads</span>
<svg style="left:110px;top:618px" width="12" height="16" viewBox="0 0 12 16"><path d="M5.800 0h1.800c.3 2.800 4.300 4 4.300 7.800 0 2-1 3.500-2.300 4.600 1.300-3.200-.3-5.400-2-6v6.400c0 1.900-1.800 3.200-3.900 3.200-2 0-3.400-1.100-3.400-2.600 0-1.600 1.600-2.800 3.500-2.800.8 0 1.500.2 2 .5z" fill="#2196f3"/><path d="M5.800 0h1.800c.1 1 .6 1.800 1.200 2.500l-3 1.500z" fill="#42a5f5"/></svg>
<span class="t" style="left:129.3px;top:616.0px;font-size:11.5px;color:#000;letter-spacing:0.442px;">Musik</span>
<svg style="left:109px;top:643px" width="14" height="15" viewBox="0 0 14 15"><rect x="0" y="0" width="14" height="15" fill="#3a3a3a"/><rect x="3" y="1" width="8" height="6" fill="#6b8fd0"/><rect x="3" y="1" width="4" height="3" fill="#d9c26a"/><rect x="7" y="3" width="4" height="4" fill="#7aa84f"/><rect x="3" y="5" width="4" height="2" fill="#8a5a3a"/><rect x="3" y="8" width="8" height="6" fill="#4f7fd0"/><rect x="3" y="11" width="8" height="3" fill="#2f5fb0"/><rect x="6" y="9" width="3" height="3" fill="#e0c060"/><rect x=".8" y="1.0" width="1.300" height="1.400" fill="#fff"/><rect x="11.900" y="1.0" width="1.300" height="1.400" fill="#fff"/><rect x=".8" y="3.4" width="1.300" height="1.400" fill="#fff"/><rect x="11.900" y="3.4" width="1.300" height="1.400" fill="#fff"/><rect x=".8" y="5.8" width="1.300" height="1.400" fill="#fff"/><rect x="11.900" y="5.8" width="1.300" height="1.400" fill="#fff"/><rect x=".8" y="8.2" width="1.300" height="1.400" fill="#fff"/><rect x="11.900" y="8.2" width="1.300" height="1.400" fill="#fff"/><rect x=".8" y="10.6" width="1.300" height="1.400" fill="#fff"/><rect x="11.900" y="10.6" width="1.300" height="1.400" fill="#fff"/><rect x=".8" y="13.0" width="1.300" height="1.400" fill="#fff"/><rect x="11.900" y="13.0" width="1.300" height="1.400" fill="#fff"/></svg>
<span class="t" style="left:129.3px;top:640.0px;font-size:11.5px;color:#000;letter-spacing:-0.034px;">Videos</span>
<svg style="left:108px;top:668.5px" width="15" height="11" viewBox="0 0 15 11"><path d="M1 7.500l1.800-3.300h10l1.800 3.300z" fill="#d2d5d8"/><rect x="1" y="7.500" width="13.600" height="3.300" fill="#4b4f54"/><rect x="1" y="7.500" width="13.600" height=".9" fill="#9aa0a7"/><rect x="10.500" y="9.300" width="1.800" height=".9" fill="#6fe06f"/><rect x="0" y="0" width="2.600" height="2.500" fill="#1eaaf0"/><rect x="3.100" y="0" width="2.600" height="2.500" fill="#1eaaf0"/><rect x="0" y="3" width="2.600" height="2.500" fill="#1eaaf0"/><rect x="3.100" y="3" width="2.600" height="2.500" fill="#1eaaf0"/></svg>
<span class="t" style="left:129.3px;top:664.0px;font-size:11.5px;color:#000;letter-spacing:-0.426px;">CHRISTINE (C:)</span>
<svg style="left:100px;top:444.5px" width="16" height="10.5" viewBox="0 0 16 10.5"><path d="M3.600 10.500a3.500 3.500 0 0 1-.6-6.900 4.600 4.600 0 0 1 8.300-1.300 3.300 3.300 0 0 1 2.300.2 2.900 2.900 0 0 1 2.400 2.900 2.700 2.700 0 0 1-1 5.100z" fill="#1b85dd"/><path d="M3.600 10.500a3.500 3.500 0 0 1-.6-6.900 4.600 4.600 0 0 1 3.500-3l3 5.500-4 4.400z" fill="#0f62b8"/><path d="M5.500 10.500l8.100-8a2.900 2.900 0 0 1 2.400 2.900 2.700 2.700 0 0 1-1 5.100z" fill="#2d9cee"/></svg>
<span class="t" style="left:121.3px;top:440.0px;font-size:11.5px;color:#000;letter-spacing:0.060px;">OneDrive</span>
<svg style="left:100px;top:475px" width="16" height="14.5" viewBox="0 0 16 14.5"><defs><linearGradient id="pcg" x1="0" y1="0" x2="1" y2="1"><stop offset="0" stop-color="#3fa6f2"/><stop offset=".5" stop-color="#6cc0f8"/><stop offset="1" stop-color="#3fa6f2"/></linearGradient></defs><rect x=".4" y=".4" width="15.200" height="9.400" fill="url(#pcg)" stroke="#4c7898" stroke-width=".8"/><rect x="5.500" y="10.600" width="5" height="1" fill="#9aa6b8"/><rect x="0" y="13" width="16" height="1.200" fill="#a8aed0"/></svg>
<span class="t" style="left:121.3px;top:472.0px;font-size:11.5px;color:#000;letter-spacing:-0.376px;">Dieser PC</span>
<div class="a" style="left:357px;top:222px;width:1px;height:457px;background:#f3f3f3"></div>
<div class="a" style="left:339px;top:222px;width:16px;height:457px;background:#f0f0f0"></div>
<div class="a" style="left:339px;top:239px;width:15px;height:370px;background:#cdcdcd"></div>
<svg style="left:343px;top:229px" width="9" height="6" viewBox="0 0 9 6"><path d="M.8 5.200l3.700-3.700 3.700 3.700" fill="none" stroke="#505050" stroke-width="1.800"/></svg>
<svg style="left:343px;top:668px" width="9" height="6" viewBox="0 0 9 6"><path d="M.8 .8l3.700 3.700 3.700-3.700" fill="none" stroke="#505050" stroke-width="1.800"/></svg>
<div class="a" style="left:76px;top:680px;width:898px;height:23px;background:#fff"></div>
<span class="t" style="left:90px;top:681.0px;font-size:11.5px;color:#333;letter-spacing:-0.058px;">12 Elemente</span>
<div class="a" style="left:164px;top:684px;width:1px;height:14px;background:#efefef"></div>
<span class="t" style="left:175px;top:681.0px;font-size:11.5px;color:#333;letter-spacing:0.097px;">1 Element ausgewählt</span>
<div class="a" style="left:300px;top:684px;width:1px;height:14px;background:#efefef"></div>
<div class="a" style="left:925px;top:679px;width:22px;height:23px;background:#cce8ff;border:1px solid #7ec0ee;box-sizing:border-box"></div>
<svg style="left:929px;top:684px" width="16" height="13" viewBox="0 0 16 13"><rect x=".5" y="0.5" width="3" height="3" fill="#fff" stroke="#8a8a8a" stroke-width=".8"/><rect x="5" y="1.5" width="4" height="1" fill="#777"/><rect x="10" y="1.5" width="4" height="1" fill="#777"/><rect x=".5" y="4.5" width="3" height="3" fill="#fff" stroke="#8a8a8a" stroke-width=".8"/><rect x="5" y="5.5" width="4" height="1" fill="#777"/><rect x="10" y="5.5" width="4" height="1" fill="#777"/><rect x=".5" y="8.5" width="3" height="3" fill="#fff" stroke="#8a8a8a" stroke-width=".8"/><rect x="5" y="9.5" width="4" height="1" fill="#777"/><rect x="10" y="9.5" width="4" height="1" fill="#777"/></svg>
<svg style="left:951px;top:684px" width="14" height="11" viewBox="0 0 14 11"><rect x=".5" y=".5" width="13" height="10" fill="#fff" stroke="#8c8c8c"/><rect x="2" y="2" width="10" height="7" fill="#bfe3f7"/><path d="M2 6c3-2 5-1 10 0v3h-10z" fill="#2d6b7f"/></svg>
<span class="t" style="left:376px;top:225.0px;font-size:11.5px;color:#4c607a;letter-spacing:-0.229px;">Name</span>
<span class="t" style="left:637px;top:225.0px;font-size:11.5px;color:#4c607a;letter-spacing:0.416px;">Änderungsdatum</span>
<span class="t" style="left:781px;top:225.0px;font-size:11.5px;color:#4c607a;letter-spacing:-0.273px;">Typ</span>
<span class="t" style="left:901px;top:225.0px;font-size:11.5px;color:#4c607a;letter-spacing:-0.148px;">Größe</span>
<div class="a" style="left:630px;top:222px;width:1px;height:25px;background:#e5e5e5"></div>
<div class="a" style="left:774px;top:222px;width:1px;height:25px;background:#e5e5e5"></div>
<div class="a" style="left:894px;top:222px;width:1px;height:25px;background:#e5e5e5"></div>
<svg style="left:365px;top:262px" width="11" height="7" viewBox="0 0 11 7"><path d="M.5 .5l5 5 5-5" fill="none" stroke="#6a6a6a" stroke-width="1.100"/></svg>
<span class="t" style="left:380px;top:256.0px;font-size:15px;color:#1e3287;letter-spacing:-0.016px;-webkit-text-stroke:0;">Häufig verwendete Ordner (7)</span>
<div class="a" style="left:585px;top:266px;width:381px;height:1px;background:#e2e2e2"></div>
<svg style="left:365px;top:441px" width="11" height="7" viewBox="0 0 11 7"><path d="M.5 .5l5 5 5-5" fill="none" stroke="#6a6a6a" stroke-width="1.100"/></svg>
<span class="t" style="left:380px;top:435.0px;font-size:15px;color:#1e3287;letter-spacing:-0.004px;-webkit-text-stroke:0;">Zuletzt verwendete Dateien (5)</span>
<div class="a" style="left:592px;top:445px;width:374px;height:1px;background:#e2e2e2"></div>
<div class="a" style="left:373px;top:407px;width:598px;height:22px;background:#cce8ff;border:1px solid #99d1ff;box-sizing:border-box"></div>
<svg style="left:377px;top:285px" width="16" height="12" viewBox="0 0 16 12"><defs><linearGradient id="dg" x1="0" y1="0" x2="1" y2="1"><stop offset="0" stop-color="#1f8df0"/><stop offset=".5" stop-color="#2fa3f8"/><stop offset="1" stop-color="#2196f3"/></linearGradient></defs><rect x="0" y="0" width="16" height="12" fill="#1a7ad6"/><rect x=".6" y=".6" width="14.800" height="9.400" fill="url(#dg)"/><rect x=".6" y="10" width="14.800" height="1.400" fill="#1f86e4"/><rect x="1.500" y="10.200" width="1.200" height="1" fill="#fff"/><rect x="13.300" y="10.200" width="1.200" height="1" fill="#fff"/><rect x="11.500" y="10.200" width="1" height="1" fill="#cfe6fb"/></svg>
<span class="t" style="left:397.3px;top:282.0px;font-size:11.5px;color:#000;letter-spacing:0.052px;">Desktop</span>
<span class="t" style="left:637px;top:282.0px;font-size:11.5px;color:#6d6d6d;letter-spacing:-0.369px;">08.04.2023 12:28</span>
<span class="t" style="left:781px;top:282.0px;font-size:11.5px;color:#6d6d6d;letter-spacing:0.128px;">Systemordner</span>
<svg style="left:377px;top:304px" width="16" height="16" viewBox="0 0 16 16"><defs><linearGradient id="dlg" x1="0" y1="0" x2="0" y2="1"><stop offset="0" stop-color="#62aaec"/><stop offset=".5" stop-color="#3a8fe0"/><stop offset="1" stop-color="#2f7fd4"/></linearGradient></defs><path d="M4.700 0h6.600v8h4.700l-8 8-8-8h4.700z" fill="url(#dlg)"/></svg>
<span class="t" style="left:397.3px;top:303.0px;font-size:11.5px;color:#000;letter-spacing:0.262px;">Downloads</span>
<span class="t" style="left:637px;top:303.0px;font-size:11.5px;color:#6d6d6d;letter-spacing:-0.369px;">09.04.2023 15:18</span>
<span class="t" style="left:781px;top:303.0px;font-size:11.5px;color:#6d6d6d;letter-spacing:0.128px;">Systemordner</span>
<svg style="left:379px;top:325px" width="12" height="16" viewBox="0 0 12 16"><path d="M.5 .5h7.500l3.500 3.500v11.500h-11z" fill="#fff" stroke="#8f8f8f"/><path d="M8 .5v3.500h3.500" fill="#efefef" stroke="#8f8f8f"/><rect x="2" y="3" width="4" height="1" fill="#3b8fde"/><rect x="3" y="2" width="2" height="3" fill="#3b8fde" opacity=".6"/><rect x="2" y="6" width="8" height="1" fill="#4a94dc"/><rect x="2" y="8" width="8" height="1" fill="#4a94dc"/><rect x="2" y="10" width="8" height="1" fill="#7f97b2"/><rect x="2" y="12" width="3" height="2" fill="#9cb3cc"/><rect x="6" y="12" width="4" height="1" fill="#34495e"/><rect x="6" y="13" width="4" height="1" fill="#9cb3cc"/></svg>
<span class="t" style="left:397.3px;top:324.0px;font-size:11.5px;color:#000;letter-spacing:0.398px;">Dokumente</span>
<span class="t" style="left:637px;top:324.0px;font-size:11.5px;color:#6d6d6d;letter-spacing:-0.369px;">09.02.2023 00:37</span>
<span class="t" style="left:781px;top:324.0px;font-size:11.5px;color:#6d6d6d;letter-spacing:0.128px;">Systemordner</span>
<svg style="left:377px;top:348px" width="16" height="12" viewBox="0 0 16 12"><defs><linearGradient id="pg" x1="0" y1="0" x2="0" y2="1"><stop offset="0" stop-color="#9fd6f7"/><stop offset=".55" stop-color="#d6ecf7"/><stop offset="1" stop-color="#8fb9c9"/></linearGradient></defs><rect x=".5" y=".5" width="15" height="11" fill="#fff" stroke="#9a9a9a"/><rect x="2" y="2" width="12" height="8" fill="url(#pg)"/><path d="M2 6.500c2-2 4-2 6-.5s4 2 6 1.500v2.500h-12z" fill="#2f6f78"/><path d="M2 8.500c4-1 8-.5 12 .5v1h-12z" fill="#3f7f5f"/></svg>
<span class="t" style="left:397.3px;top:345.0px;font-size:11.5px;color:#000;letter-spacing:0.159px;">Bilder</span>
<span class="t" style="left:637px;top:345.0px;font-size:11.5px;color:#6d6d6d;letter-spacing:-0.369px;">09.02.2023 00:37</span>
<span class="t" style="left:781px;top:345.0px;font-size:11.5px;color:#6d6d6d;letter-spacing:0.128px;">Systemordner</span>
<svg style="left:379px;top:367px" width="12" height="16" viewBox="0 0 12 16"><path d="M5.800 0h1.800c.3 2.800 4.300 4 4.300 7.800 0 2-1 3.500-2.300 4.600 1.300-3.200-.3-5.400-2-6v6.400c0 1.900-1.800 3.200-3.900 3.200-2 0-3.400-1.100-3.400-2.600 0-1.600 1.600-2.800 3.500-2.800.8 0 1.500.2 2 .5z" fill="#2196f3"/><path d="M5.800 0h1.800c.1 1 .6 1.800 1.200 2.500l-3 1.500z" fill="#42a5f5"/></svg>
<span class="t" style="left:397.3px;top:366.0px;font-size:11.5px;color:#000;letter-spacing:0.442px;">Musik</span>
<span class="t" style="left:637px;top:366.0px;font-size:11.5px;color:#6d6d6d;letter-spacing:-0.369px;">09.02.2023 00:37</span>
<span class="t" style="left:781px;top:366.0px;font-size:11.5px;color:#6d6d6d;letter-spacing:0.128px;">Systemordner</span>
<svg style="left:378px;top:389px" width="14" height="15" viewBox="0 0 14 15"><rect x="0" y="0" width="14" height="15" fill="#3a3a3a"/><rect x="3" y="1" width="8" height="6" fill="#6b8fd0"/><rect x="3" y="1" width="4" height="3" fill="#d9c26a"/><rect x="7" y="3" width="4" height="4" fill="#7aa84f"/><rect x="3" y="5" width="4" height="2" fill="#8a5a3a"/><rect x="3" y="8" width="8" height="6" fill="#4f7fd0"/><rect x="3" y="11" width="8" height="3" fill="#2f5fb0"/><rect x="6" y="9" width="3" height="3" fill="#e0c060"/><rect x=".8" y="1.0" width="1.300" height="1.400" fill="#fff"/><rect x="11.900" y="1.0" width="1.300" height="1.400" fill="#fff"/><rect x=".8" y="3.4" width="1.300" height="1.400" fill="#fff"/><rect x="11.900" y="3.4" width="1.300" height="1.400" fill="#fff"/><rect x=".8" y="5.8" width="1.300" height="1.400" fill="#fff"/><rect x="11.900" y="5.8" width="1.300" height="1.400" fill="#fff"/><rect x=".8" y="8.2" width="1.300" height="1.400" fill="#fff"/><rect x="11.900" y="8.2" width="1.300" height="1.400" fill="#fff"/><rect x=".8" y="10.6" width="1.300" height="1.400" fill="#fff"/><rect x="11.900" y="10.6" width="1.300" height="1.400" fill="#fff"/><rect x=".8" y="13.0" width="1.300" height="1.400" fill="#fff"/><rect x="11.900" y="13.0" width="1.300" height="1.400" fill="#fff"/></svg>
<span class="t" style="left:397.3px;top:387.0px;font-size:11.5px;color:#000;letter-spacing:-0.034px;">Videos</span>
<span class="t" style="left:637px;top:387.0px;font-size:11.5px;color:#6d6d6d;letter-spacing:-0.369px;">09.02.2023 00:37</span>
<span class="t" style="left:781px;top:387.0px;font-size:11.5px;color:#6d6d6d;letter-spacing:0.128px;">Systemordner</span>
<svg style="left:378px;top:413px" width="14" height="11" viewBox="0 0 14 11"><path d="M.8 6l1.400-3h6.500l1.300 3z" fill="#c9ccd0"/><rect x="0" y="6" width="10" height="3.600" fill="#4b4f54"/><rect x="0" y="6" width="10" height="1" fill="#8b9096"/><text x="8.200" y="9.600" font-family="Liberation Sans,sans-serif" font-size="12.500" font-weight="700" fill="#2f7fc8" stroke="#fff" stroke-width="1.600" paint-order="stroke">?</text></svg>
<span class="t" style="left:397.3px;top:408.0px;font-size:11.5px;color:#000;letter-spacing:0.539px;">Z:\</span>
<svg style="left:379px;top:462px" width="12" height="16" viewBox="0 0 12 16"><path d="M.5 .5h7.500l3.500 3.500v11.500h-11z" fill="#fff" stroke="#8c8c8c"/><path d="M8 .5v3.500h3.500" fill="#f0f0f0" stroke="#8c8c8c"/></svg>
<span class="t" style="left:397.3px;top:461.0px;font-size:11.5px;color:#000;letter-spacing:0.105px;">feedbro-locale-en_US.json</span>
<span class="t" style="left:637px;top:461.0px;font-size:11.5px;color:#6d6d6d;letter-spacing:-0.369px;">09.04.2023 15:18</span>
<span class="t" style="left:781px;top:461.0px;font-size:11.5px;color:#6d6d6d;letter-spacing:-0.151px;">JSON-Datei</span>
<span class="t" style="left:937.5px;top:461.0px;font-size:11.5px;color:#6d6d6d;letter-spacing:-0.382px;">38 KB</span>
<svg style="left:379px;top:483px" width="12" height="16" viewBox="0 0 12 16"><path d="M.5 .5h7.500l3.500 3.500v11.500h-11z" fill="#fff" stroke="#8c8c8c"/><path d="M8 .5v3.500h3.500" fill="#f0f0f0" stroke="#8c8c8c"/><rect x="2" y="5" width="8" height="1" fill="#9a9a9a"/><rect x="2" y="7" width="8" height="1" fill="#9a9a9a"/><rect x="2" y="9" width="8" height="1" fill="#9a9a9a"/><rect x="2" y="11" width="8" height="1" fill="#9a9a9a"/><rect x="2" y="13" width="8" height="1" fill="#9a9a9a"/></svg>
<span class="t" style="left:397.3px;top:482.0px;font-size:11.5px;color:#000;letter-spacing:0.216px;">ToDo.txt</span>
<span class="t" style="left:637px;top:482.0px;font-size:11.5px;color:#6d6d6d;letter-spacing:-0.369px;">09.02.2023 05:13</span>
<span class="t" style="left:781px;top:482.0px;font-size:11.5px;color:#6d6d6d;letter-spacing:0.399px;">Textdokument</span>
<span class="t" style="left:943.3px;top:482.0px;font-size:11.5px;color:#6d6d6d;letter-spacing:-0.312px;">1 KB</span>
<svg style="left:379px;top:504px" width="12" height="16" viewBox="0 0 12 16"><path d="M.5 .5h7.500l3.500 3.500v11.500h-11z" fill="#fff" stroke="#8c8c8c"/><path d="M8 .5v3.500h3.500" fill="#f0f0f0" stroke="#8c8c8c"/><rect x="2.500" y="5.500" width="7" height="7" fill="#1f6fc4"/><path d="M3 12l2.500-3 1.500 1.500 1-1 1.500 2.500z" fill="#9fd0f5"/><rect x="3" y="6" width="2" height="2" fill="#fff" opacity=".8"/></svg>
<span class="t" style="left:397.3px;top:503.0px;font-size:11.5px;color:#000;letter-spacing:0.039px;">Scrat.jpg</span>
<span class="t" style="left:637px;top:503.0px;font-size:11.5px;color:#6d6d6d;letter-spacing:-0.312px;">31.03.2023 11:44</span>
<span class="t" style="left:781px;top:503.0px;font-size:11.5px;color:#6d6d6d;letter-spacing:-0.256px;">JPG-Datei</span>
<span class="t" style="left:943.3px;top:503.0px;font-size:11.5px;color:#6d6d6d;letter-spacing:-0.312px;">4 KB</span>
<svg style="left:379px;top:525px" width="12" height="16" viewBox="0 0 12 16"><path d="M.5 .5h7.500l3.500 3.500v11.500h-11z" fill="#fff" stroke="#8c8c8c"/><path d="M8 .5v3.500h3.500" fill="#f0f0f0" stroke="#8c8c8c"/><rect x="2" y="5" width="8" height="1" fill="#9a9a9a"/><rect x="2" y="7" width="8" height="1" fill="#9a9a9a"/><rect x="2" y="9" width="8" height="1" fill="#9a9a9a"/><rect x="2" y="11" width="8" height="1" fill="#9a9a9a"/><rect x="2" y="13" width="8" height="1" fill="#9a9a9a"/></svg>
<span class="t" style="left:397.3px;top:524.0px;font-size:11.5px;color:#000;letter-spacing:0.458px;">Nix.txt</span>
<span class="t" style="left:637px;top:524.0px;font-size:11.5px;color:#6d6d6d;letter-spacing:-0.369px;">31.03.2023 17:39</span>
<span class="t" style="left:781px;top:524.0px;font-size:11.5px;color:#6d6d6d;letter-spacing:0.399px;">Textdokument</span>
<span class="t" style="left:943.3px;top:524.0px;font-size:11.5px;color:#6d6d6d;letter-spacing:-0.312px;">1 KB</span>
<svg style="left:379px;top:546px" width="12" height="16" viewBox="0 0 12 16"><path d="M0 1h5l1 1h6v14h-12z" fill="#f2c94c"/><rect x="0" y="3" width="12" height="13" fill="#f7dd7e"/><rect x="5" y="1" width="2.500" height="11" fill="#888"/><rect x="5" y="1" width="2.500" height="1" fill="#ddd"/><rect x="5" y="3" width="2.500" height="1" fill="#ddd"/><rect x="5" y="5" width="2.500" height="1" fill="#ddd"/><rect x="5" y="7" width="2.500" height="1" fill="#ddd"/><rect x="5" y="9" width="2.500" height="1" fill="#ddd"/><rect x="5" y="11" width="2.500" height="1" fill="#ddd"/><rect x="4.500" y="11" width="3.500" height="3" fill="#555"/></svg>
<span class="t" style="left:397.3px;top:545.0px;font-size:11.5px;color:#000;letter-spacing:0.030px;">wordpress-6.1.1-de_CH.zip</span>
<span class="t" style="left:637px;top:545.0px;font-size:11.5px;color:#6d6d6d;letter-spacing:-0.369px;">14.02.2023 00:52</span>
<span class="t" style="left:781px;top:545.0px;font-size:11.5px;color:#6d6d6d;letter-spacing:0.291px;">ZIP-komprimierte...</span>
<span class="t" style="left:917px;top:545.0px;font-size:11.5px;color:#6d6d6d;letter-spacing:-0.347px;">24’626 KB</span>
<div class="a" style="left:359px;top:663px;width:614px;height:16px;background:#f0f0f0"></div>
<div class="a" style="left:376px;top:663px;width:569px;height:16px;background:#cdcdcd"></div>
<svg style="left:365px;top:666.5px" width="6" height="9" viewBox="0 0 6 9"><path d="M5.200 .8l-3.700 3.700 3.700 3.700" fill="none" stroke="#505050" stroke-width="1.800"/></svg>
<svg style="left:961px;top:666.5px" width="6" height="9" viewBox="0 0 6 9"><path d="M.8 .8l3.700 3.700-3.700 3.700" fill="none" stroke="#505050" stroke-width="1.800"/></svg>
<div id="task"></div>
<svg style="left:16px;top:740px" width="16" height="16" viewBox="0 0 16 16"><path d="M0 2.300l6.500-.9v6.100h-6.500zM7.300 1.300l8.700-1.300v7.500h-8.700zM0 8.300h6.500v6.100l-6.500-.9zM7.300 8.300h8.700v7.700l-8.700-1.300z" fill="#fff"/></svg>
<div class="a" style="left:48px;top:728px;width:288px;height:40px;background:#f2f2f2;border-bottom:2px solid #c6c6c6;box-sizing:border-box"></div>
<svg style="left:60px;top:740px" width="16" height="16" viewBox="0 0 16 16"><circle cx="10" cy="6" r="5" fill="none" stroke="#222" stroke-width="1.400"/><path d="M6.300 9.700l-6 6" stroke="#222" stroke-width="1.400"/></svg>
<span class="t" style="left:88px;top:738.5px;font-size:14.5px;color:#333;letter-spacing:-0.438px;-webkit-text-stroke:0.1px;">Suchen</span>
<svg style="left:256px;top:728px" width="80" height="40" viewBox="0 0 80 40"><defs><radialGradient id="sg" cx=".5" cy=".5" r=".5"><stop offset="0" stop-color="#fff"/><stop offset=".3" stop-color="#fdf6ff"/><stop offset=".55" stop-color="#ecd0f7"/><stop offset=".72" stop-color="#dad0f8"/><stop offset=".86" stop-color="#ccf2ee" stop-opacity=".9"/><stop offset="1" stop-color="#f2f2f2" stop-opacity="0"/></radialGradient><linearGradient id="sgr" x1="0" y1="0" x2="1" y2="1"><stop offset="0" stop-color="#3f55c8"/><stop offset=".5" stop-color="#8f8cf0"/><stop offset=".75" stop-color="#d9b4f6"/><stop offset="1" stop-color="#6f7fe0"/></linearGradient><clipPath id="sc"><rect x="0" y="0" width="80" height="40"/></clipPath></defs><g clip-path="url(#sc)"><ellipse cx="45" cy="27" rx="31" ry="25" fill="url(#sg)"/><path d="M7 40c5-7 12-11 24-13.500 10-1.500 22-.5 30 1.500 8 2.500 14 6 19 9v3z" fill="url(#sgr)"/><ellipse cx="45.500" cy="32.300" rx="11.500" ry="2.200" fill="#223a5e"/><path d="M45 15l-3 3.500h1.500l-4 4h2l-5 4.500h3l-4 4.500h19l-4-4.500h2.500l-4-4h1.500l-3-3.500-1.500 1.500z" fill="#2b5676"/><path d="M14 31l1-3.500 1.500-5 1.500 5 .8 2 1.200-5 1.500-3.500 1.500 6 1-2.500 1.500 4 1-2.500 1.500 4.500.5 2.500-8 3.500-5 2z" fill="#2a5f7c"/><path d="M61 29l1-6 1.500-3 1.500 5 1-6 2-3 1.500 7 1-4 1.500-3 1.500 5 1-6 2-4 2.500 9v18h-6l-3-3-6-3.500z" fill="#27506f"/></g></svg>
<div class="a" style="left:339px;top:728px;width:48px;height:40px;background:#34444e"></div>
<div class="a" style="left:339px;top:766px;width:48px;height:2px;background:#7fc0f0"></div>
<svg style="left:352px;top:738px" width="22" height="18.5" viewBox="0 0 22 18.5"><path d="M0 1.200a1 1 0 0 1 1-1h7l1.800 2.300h11.200a1 1 0 0 1 1 1v14a1 1 0 0 1-1 1h-20a1 1 0 0 1-1-1z" fill="#e3a11c"/><path d="M0 4.500h7.500l2-1.500h11.500a1 1 0 0 1 1 1v13.500a1 1 0 0 1-1 1h-20a1 1 0 0 1-1-1z" fill="#fbd467"/><path d="M4.500 18.500v-6a2.500 2.500 0 0 1 2.500-2.500h8a2.500 2.500 0 0 1 2.500 2.500v6h-3.500v-4.500h-6v4.500z" fill="#3a92de"/><path d="M4.500 16.500h3.500v2h-3.500zM14 16.500h3.500v2h-3.500z" fill="#2b78c4"/></svg>
<div class="a" style="left:392px;top:766px;width:40px;height:2px;background:#7fc0f0"></div>
<svg style="left:400px;top:735.5px" width="24" height="24" viewBox="0 0 24 24"><defs><linearGradient id="ffg2" x1=".3" y1="0" x2=".7" y2="1"><stop offset="0" stop-color="#ffbd2e"/><stop offset=".4" stop-color="#ff7a28"/><stop offset=".75" stop-color="#f8344e"/><stop offset="1" stop-color="#d82a9c"/></linearGradient><linearGradient id="ffy2" x1="0" y1="0" x2="0" y2="1"><stop offset="0" stop-color="#fff04a"/><stop offset="1" stop-color="#ffb02a"/></linearGradient></defs><path d="M11 7c.5-3 2-5.500 4-7 .5 2 2 3 3.500 4.500 1.500 1.700 2.500 3.500 3 5.500z" fill="url(#ffy2)"/><path d="M2.500 8.500c.3-1.500 1-3 2-4 .3 1 .8 1.800 1.500 2.300.8-1.200 1.800-2 3-2.500.2 1 .6 1.800 1.300 2.300 4-1 8 .3 10.500 3.200 2.500 3 3 7 1 10.200a11.300 11.300 0 0 1-21-4.500c-.3-2.500.3-5 1.700-7z" fill="url(#ffg2)"/><circle cx="11.500" cy="12.300" r="4.800" fill="#7b3fe4"/><path d="M4.500 9.500c2-.8 4.500-.6 6.500.5l3 1.200-2.200 1.200c-1 .7-1.800 1.500-1.800 3-1.500-1.500-3.500-2.500-5.500-2.800z" fill="#ffa62a"/></svg>
<svg style="left:448.5px;top:736px" width="25" height="24" viewBox="0 0 25 24"><defs><linearGradient id="eg" x1="0" y1="0" x2=".6" y2="1"><stop offset="0" stop-color="#2fa8e8"/><stop offset=".6" stop-color="#1b7fd4"/><stop offset="1" stop-color="#1560b0"/></linearGradient><linearGradient id="eg2" x1="0" y1=".4" x2="1" y2=".3"><stop offset="0" stop-color="#2aa4e6"/><stop offset=".55" stop-color="#3fc0b8"/><stop offset="1" stop-color="#6ad45a"/></linearGradient></defs><circle cx="12.300" cy="12" r="12" fill="url(#eg)"/><path d="M.6 10a12 12 0 0 1 23.700 2c0 3.200-2.300 5.300-5.300 5.300-2.500 0-4-1.200-4-2.300.8-.8 1.200-1.800 1.200-3 0-3.200-3-5.300-6.300-5.300-4.200 0-7.800 2.200-9.300 3.300z" fill="url(#eg2)"/><path d="M9.800 12.500c-.5 4.500 3 9 8.500 9.800a9.500 9.500 0 0 1-14.300-8.300c1-2.500 3.500-3.500 5.800-1.500z" fill="#12509a" opacity=".8"/><path d="M11 11.500c1.200-1.500 4.200-1 5 1.200-.2 1-.6 1.700-1.200 2.300 0 1.200 1.500 2.300 4 2.300 1.500 0 3-.6 4-1.700-.8 2-2 3.500-3.500 4.700-4.500.8-8.500-3-8.300-8.800z" fill="#04121f"/></svg>
<svg style="left:803px;top:743px" width="12" height="8" viewBox="0 0 12 8"><path d="M.7 7l5.300-5.500 5.300 5.500" fill="none" stroke="#fff" stroke-width="1.300"/></svg>
<div class="a" style="left:825px;top:740px;width:16px;height:16px;background:#dc1a22"></div>
<svg style="left:825px;top:740px" width="16" height="16" viewBox="0 0 16 16"><path d="M4.300 12C2.300 9.300 3 6 6 4.800C8 4.200 10 4.500 11.700 5.700C12.500 6.200 13 6.800 13.300 7.500M4.500 11.800L10.300 5.700M8.200 8.800Q9.700 11.300 12.300 12" fill="none" stroke="#fff" stroke-width="1.400" stroke-linecap="round"/></svg>
<svg style="left:849px;top:741px" width="18" height="14" viewBox="0 0 18 14"><path d="M.5 4.500h3l3.500-3.500v12l-3.500-3.500h-3z" fill="none" stroke="#fff" stroke-width="1"/><path d="M9 4.500a3.500 3.500 0 0 1 0 5M11.500 2.500a6.500 6.500 0 0 1 0 9M14 .8a9 9 0 0 1 0 12.400" fill="none" stroke="#fff" stroke-width="1"/></svg>
<span class="t" style="left:876.5px;top:738.0px;font-size:11.5px;color:#fff;letter-spacing:-1.391px;">DEU</span>
<span class="t" style="left:923px;top:728.5px;font-size:11.5px;color:#fff;letter-spacing:-0.195px;">15:32</span>
<span class="t" style="left:911px;top:746.5px;font-size:11.5px;color:#fff;letter-spacing:-0.396px;">09.04.2023</span>
<svg style="left:983px;top:740px" width="16" height="16" viewBox="0 0 16 16"><path d="M.6 .6h14.800v11h-5.400l-2 3-2-3h-5.400z" fill="none" stroke="#fff" stroke-width="1.200"/></svg>
<div class="a" style="left:1019px;top:728px;width:1px;height:40px;background:#6a7682"></div>
</body></html>
